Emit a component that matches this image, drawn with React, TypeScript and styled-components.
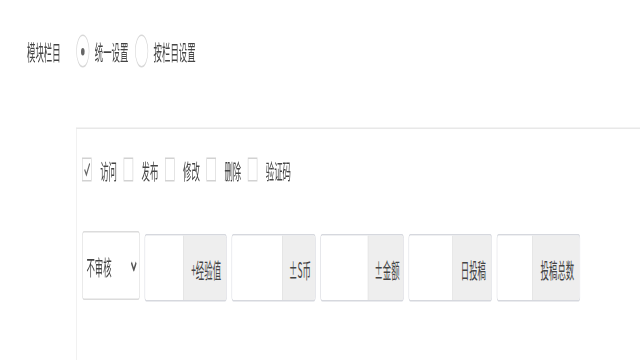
import React from "react";
import styled, { createGlobalStyle } from "styled-components";

const Global = createGlobalStyle`
  html, body { margin: 0; padding: 0; background: #fff; overflow: hidden; }
  body { font-family: "Noto Sans CJK SC", "Noto Sans", sans-serif; color: #444; }
`;

const Viewport = styled.div`
  width: 640px;
  height: 360px;
  overflow: hidden;
`;

const Stage = styled.div`
  width: 1067px;
  height: 240px;
  box-sizing: border-box;
  padding-top: 15px;
  transform: scale(0.6, 1.5);
  transform-origin: 0 0;
  font-size: 14px;
  color: #444;
`;

const FormRow = styled.div`
  display: flex;
  align-items: center;
  height: 38px;
`;

const Label = styled.div`
  width: 127px;
  box-sizing: border-box;
  padding-left: 45px;
  line-height: 20px;
`;

const RadioItem = styled.label`
  display: flex;
  align-items: center;
  gap: 9px;
  margin-right: 11px;
`;

const RadioCircle = styled.span<{ $on?: boolean }>`
  width: 20px;
  height: 20px;
  border: 1px solid #d8d8d8;
  border-radius: 50%;
  display: flex;
  align-items: center;
  justify-content: center;
  &::after {
    content: "";
    display: ${(p) => (p.$on ? "block" : "none")};
    width: 6px;
    height: 5px;
    border-radius: 50%;
    background: #666;
  }
`;

const Panel = styled.div`
  margin-left: 127px;
  margin-top: 32px;
  border-top: 1px solid #e8e8e8;
  border-left: 1px solid #e8e8e8;
  padding: 17px 0 0 9px;
  height: 200px;
`;

const CheckRow = styled.div`
  display: flex;
  align-items: center;
  height: 20px;
`;

const CheckItem = styled.label`
  display: flex;
  align-items: center;
  gap: 14px;
  margin-right: 11px;
`;

const CheckBox = styled.span`
  width: 14px;
  height: 14px;
  border: 1px solid #d2d2d2;
  display: flex;
  align-items: center;
  justify-content: center;
`;

const ControlRow = styled.div`
  display: flex;
  align-items: flex-start;
  gap: 8px;
  margin-top: 31px;
`;

const Select = styled.div`
  width: 96px;
  height: 46px;
  box-sizing: border-box;
  border: 1px solid #dcdcdc;
  border-radius: 3px;
  display: flex;
  align-items: center;
  justify-content: space-between;
  padding: 0 4px 0 6px;
`;

const Group = styled.div<{ $w: number }>`
  width: ${(p) => p.$w}px;
  height: 45px;
  margin-top: 2px;
  box-sizing: border-box;
  border: 1px solid #d6d8de;
  border-radius: 3px;
  display: flex;
  overflow: hidden;
`;

const Input = styled.div`
  flex: 1;
  background: #fff;
`;

const Addon = styled.div<{ $w: number }>`
  width: ${(p) => p.$w}px;
  box-sizing: border-box;
  background: #eeeeee;
  border-left: 1px solid #e0e0e0;
  display: flex;
  align-items: center;
  justify-content: center;
  padding-left: 4px;
  color: #444;
`;

const checks = ["访问", "发布", "修改", "删除", "验证码"];
const groups: { label: string; w: number; a: number }[] = [
  { label: "+经验值", w: 137, a: 72 },
  { label: "±S币", w: 140, a: 55 },
  { label: "±金额", w: 139, a: 59 },
  { label: "日投稿", w: 139, a: 65 },
  { label: "投稿总数", w: 139, a: 79 },
];

export default function App() {
  return (
    <Viewport>
      <Global />
      <Stage>
        <FormRow>
          <Label>模块栏目</Label>
          <RadioItem>
            <RadioCircle $on />
            <span>统一设置</span>
          </RadioItem>
          <RadioItem>
            <RadioCircle />
            <span>按栏目设置</span>
          </RadioItem>
        </FormRow>
        <Panel>
          <CheckRow>
            {checks.map((c, i) => (
              <CheckItem key={c}>
                <CheckBox>
                  {i === 0 && (
                    <svg width="12" height="10" viewBox="0 0 12 10">
                      <polyline points="2,5 5,8.5 10.5,1" fill="none" stroke="#666" strokeWidth="1.6" />
                    </svg>
                  )}
                </CheckBox>
                <span>{c}</span>
              </CheckItem>
            ))}
          </CheckRow>
          <ControlRow>
            <Select>
              <span>不审核</span>
              <svg width="10" height="7" viewBox="0 0 10 7">
                <polyline points="1,1 5,6 9,1" fill="none" stroke="#555" strokeWidth="2" />
              </svg>
            </Select>
            {groups.map((g) => (
              <Group key={g.label} $w={g.w}>
                <Input />
                <Addon $w={g.a}>{g.label}</Addon>
              </Group>
            ))}
          </ControlRow>
        </Panel>
      </Stage>
    </Viewport>
  );
}
